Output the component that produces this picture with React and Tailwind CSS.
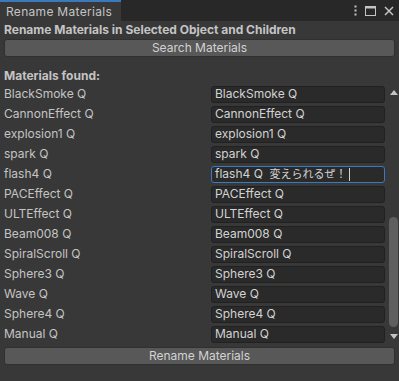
const materials = [
  "BlackSmoke Q",
  "CannonEffect Q",
  "explosion1 Q",
  "spark Q",
  "flash4 Q",
  "PACEffect Q",
  "ULTEffect Q",
  "Beam008 Q",
  "SpiralScroll Q",
  "Sphere3 Q",
  "Wave Q",
  "Sphere4 Q",
  "Manual Q",
];

function MaterialRow({ name }) {
  const editing = name === "flash4 Q";
  return (
    <div className="flex h-[20px] items-center">
      <div className="w-[211px] pl-1 text-[#c4c4c4]">{name}</div>
      <div
        className={
          editing
            ? "flex h-[17px] w-[174px] items-center rounded-[3px] border border-[#3a79bb] bg-[#2a2a2a] px-[3px] text-[#d2d2d2]"
            : "flex h-[17px] w-[174px] items-center rounded-[3px] border border-[#212121] bg-[#2a2a2a] px-[3px] text-[#d2d2d2]"
        }
      >
        {editing ? (
          <>
            <span className="whitespace-pre">flash4 Q  </span>
            <span className="text-[11px]">変えられるぜ！</span>
            <span className="ml-[2px] h-[13px] w-px bg-[#d2d2d2]"></span>
          </>
        ) : (
          name
        )}
      </div>
    </div>
  );
}

export default function App() {
  return (
    <div
      className="flex h-[381px] w-[399px] flex-col bg-[#383838] text-[12px] leading-none"
      style={{ fontFamily: "Inter, 'Noto Sans CJK JP', sans-serif" }}
    >
      {/* tab bar */}
      <div className="flex h-[21px] items-stretch bg-[#282828]">
        <div className="flex w-[121px] items-center border-t-2 border-[#3a79bb] bg-[#383838] pl-[6px] text-[12px] tracking-[0.3px] text-[#c4c4c4]">
          Rename Materials
        </div>
        <div className="flex-1"></div>
        <div className="flex items-center gap-[8px] pr-[5px] text-[#c4c4c4]">
          <svg width="3" height="11" viewBox="0 0 3 11">
            <rect x="0.5" y="0.5" width="2" height="2" fill="#c4c4c4" />
            <rect x="0.5" y="4.5" width="2" height="2" fill="#c4c4c4" />
            <rect x="0.5" y="8.5" width="2" height="2" fill="#c4c4c4" />
          </svg>
          <svg width="11" height="10" viewBox="0 0 11 10">
            <rect x="0.5" y="0.5" width="10" height="9" fill="none" stroke="#c4c4c4" />
            <rect x="0.5" y="0.5" width="10" height="2" fill="#c4c4c4" />
          </svg>
          <svg width="10" height="10" viewBox="0 0 10 10">
            <path d="M1 1L9 9M9 1L1 9" stroke="#c4c4c4" strokeWidth="1.5" />
          </svg>
        </div>
      </div>

      <div className="flex flex-col px-1">
        <div className="flex h-[18px] items-center font-bold text-[#c4c4c4]">
          Rename Materials in Selected Object and Children
        </div>
        <button className="h-[18px] rounded-[3px] border border-[#303030] bg-[#585858] text-[#d2d2d2]">
          Search Materials
        </button>
        <div className="mt-[10px] flex h-[17px] items-center font-bold text-[#c4c4c4]">
          Materials found:
        </div>
      </div>

      <div className="flex">
        <div className="flex w-[388px] flex-col">
          {materials.map((m) => (
            <MaterialRow key={m} name={m} />
          ))}
        </div>
        <div className="relative w-[11px]">
          <div className="absolute left-[2px] top-[6px] h-0 w-0 border-x-[4px] border-b-[5px] border-x-transparent border-b-[#c4c4c4]"></div>
          <div className="absolute left-[1px] top-[133px] h-[110px] w-[9px] rounded-full bg-[#5f5f5f]"></div>
          <div className="absolute bottom-[5px] left-[2px] h-0 w-0 border-x-[4px] border-t-[5px] border-x-transparent border-t-[#c4c4c4]"></div>
        </div>
      </div>

      <div className="px-1 pt-[3px]">
        <button className="h-[18px] w-full rounded-[3px] border border-[#303030] bg-[#585858] text-[#d2d2d2]">
          Rename Materials
        </button>
      </div>
    </div>
  );
}
